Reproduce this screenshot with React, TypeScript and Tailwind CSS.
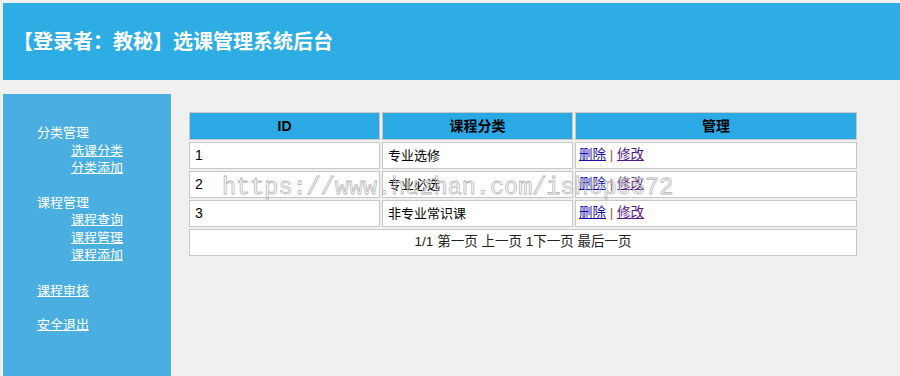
import React from 'react';

const rows = [
  { id: 1, name: '专业选修' },
  { id: 2, name: '专业必选' },
  { id: 3, name: '非专业常识课' },
];

const font = { fontFamily: '"Liberation Sans", "Noto Sans CJK SC", sans-serif' };

export default function App() {
  return (
    <div className="relative w-[900px] h-[376px] overflow-hidden bg-[#f0f0f0] text-[13px] text-black pt-[3px] pl-[3px]" style={font}>
      {/* Header */}
      <div className="h-[77px] bg-[#2eade5] flex items-center pl-[10px]">
        <h1 className="text-[20px] font-bold text-white">【登录者：教秘】选课管理系统后台</h1>
      </div>

      <div className="flex mt-[14px]">
        {/* Sidebar */}
        <div className="w-[168px] h-[290px] bg-[#4aaee0] text-white pt-[30px] pl-[34px] leading-[17.5px]">
          <div>分类管理</div>
          <div className="pl-[34px] flex flex-col">
            <a className="underline">选课分类</a>
            <a className="underline">分类添加</a>
          </div>
          <div className="mt-[17px]">课程管理</div>
          <div className="pl-[34px] flex flex-col">
            <a className="underline">课程查询</a>
            <a className="underline">课程管理</a>
            <a className="underline">课程添加</a>
          </div>
          <div className="mt-[18px]"><a className="underline">课程审核</a></div>
          <div className="mt-[17px]"><a className="underline">安全退出</a></div>
        </div>

        {/* Content */}
        <div className="pl-[18px] pt-[18px]">
          <table className="w-[672px] border-separate border-spacing-[2px] -ml-[2px] -mt-[2px]">
            <thead>
              <tr className="h-[28px]">
                <th className="w-[191px] bg-[#2aa9e4] border border-[#c8c8c8] font-bold text-[14px]">ID</th>
                <th className="w-[191px] bg-[#2aa9e4] border border-[#c8c8c8] font-bold text-[14px]">课程分类</th>
                <th className="bg-[#2aa9e4] border border-[#c8c8c8] font-bold text-[14px]">管理</th>
              </tr>
            </thead>
            <tbody>
              {rows.map(r => (
                <tr key={r.id} className="h-[27px]">
                  <td className="bg-white border border-[#c8c8c8] pl-[5px] text-[14px]">{r.id}</td>
                  <td className="bg-white border border-[#c8c8c8] pl-[5px]">{r.name}</td>
                  <td className="bg-white border border-[#c8c8c8] pl-[3px] text-[13.5px]">
                    <a className="underline text-[#1a0dab]">删除</a>
                    <span className="text-[#8a6d3b]"> | </span>
                    <a className="underline text-[#551a8b]">修改</a>
                  </td>
                </tr>
              ))}
              <tr className="h-[27px]">
                <td colSpan={3} className="bg-white border border-[#c8c8c8] text-center text-[13.5px] text-[#222]">
                  1/1 第一页 上一页 1下一页 最后一页
                </td>
              </tr>
            </tbody>
          </table>
        </div>
      </div>

      {/* Watermark */}
      <div
        className="absolute left-[222px] top-[176px] text-[23.5px] leading-none text-transparent pointer-events-none select-none"
        style={{ fontFamily: '"Liberation Mono", monospace', WebkitTextStroke: '0.8px #b8b8b8' }}
      >
        https://www.huzhan.com/ishop5572
      </div>
    </div>
  );
}
